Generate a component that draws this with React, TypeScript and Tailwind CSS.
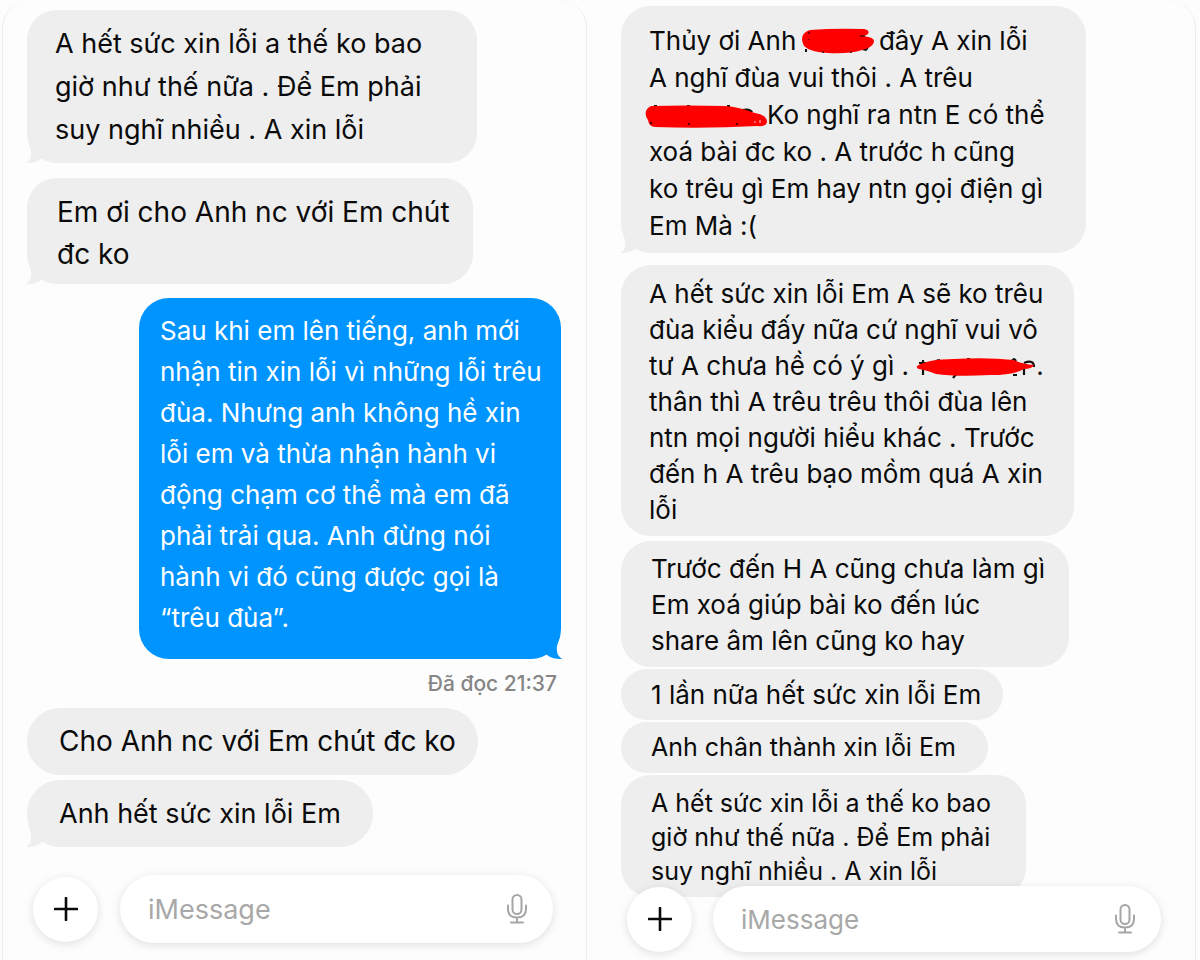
import type { ReactNode } from 'react'
import clsx from 'clsx'

type BubbleProps = {
  children: ReactNode
  className?: string
  tail?: boolean
  sent?: boolean
}

function Tail({ sent }: { sent?: boolean }) {
  return (
    <svg
      viewBox="0 0 24 24"
      aria-hidden="true"
      className={clsx(
        'absolute bottom-0 h-6 w-6',
        sent ? '-right-[3px] -scale-x-100 text-[#0094ff]' : '-left-[3px] text-[#eeeeee]',
      )}
    >
      <path d="M4 1C5 6 8 11 7 16C7 19 5 22 2 24C9 24 14 23 18 19L22 3Z" fill="currentColor" />
    </svg>
  )
}

function Bubble({ children, className, tail, sent }: BubbleProps) {
  return (
    <li
      className={clsx(
        'relative max-w-full whitespace-pre-line',
        sent ? 'self-end bg-[#0094ff] text-white' : 'self-start bg-[#eeeeee] text-[#0a0a0a]',
        className,
      )}
    >
      {tail && <Tail sent={sent} />}
      <p className="relative">{children}</p>
    </li>
  )
}

function Mic() {
  return (
    <svg viewBox="0 0 22 30" aria-hidden="true" className="h-[30px] w-[22px]" fill="none" stroke="#a6a6a6" strokeWidth="2" strokeLinecap="round">
      <rect x="6.5" y="1" width="9" height="19" rx="4.5" />
      <path d="M2 11.500V15C2 20.500 5.500 23.500 11 23.500S20 20.500 20 15V11.500M11 23.500V28.500M5 28.500H17" />
    </svg>
  )
}

function Composer({ id, className, fieldClassName }: { id: string; className: string; fieldClassName: string }) {
  return (
    <form className={clsx('relative flex items-center', className)} onSubmit={(e) => e.preventDefault()}>
      <button
        type="button"
        aria-label="Add attachment"
        className="flex h-[65px] w-[65px] shrink-0 items-center justify-center rounded-full bg-white shadow-[0_2px_10px_rgba(0,0,0,0.12)]"
      >
        <svg viewBox="0 0 24 24" className="h-6 w-6" fill="none" stroke="#0a0a0a" strokeWidth="2.6" strokeLinecap="round">
          <path d="M12 1V23M1 12H23" />
        </svg>
      </button>
      <div className={clsx('flex min-w-0 flex-1 items-center rounded-full bg-white shadow-[0_2px_10px_rgba(0,0,0,0.12)]', fieldClassName)}>
        <label htmlFor={id} className="sr-only">
          Message
        </label>
        <input
          id={id}
          type="text"
          placeholder="iMessage"
          className="h-full min-w-0 flex-1 bg-transparent outline-none placeholder:text-[#a8a8a8]"
        />
        <button type="button" aria-label="Dictate">
          <Mic />
        </button>
      </div>
    </form>
  )
}

// Marker strokes over names, with bits of the letters peeking out
function ScribbleShort() {
  return (
    <svg viewBox="0 0 76 26" aria-label="redacted" role="img" className="-mx-1 -mt-1 inline-block h-[26px] w-[76px] align-middle">
      <path d="M5 21H7V24H5ZM68 15C70 17 69 21 66 23L62 22Z" fill="#111" />
      <path d="M10 2Q35 0 64 1Q70 2 68 6Q66 8 62 8Q75 9 74 14Q72 20 62 22Q50 26 28 25Q10 24 4 18Q-2 6 10 2Z" fill="#ff0000" />
      <path d="M9 4V6M9 11V12M22 24H24M50 24H52M60 8H65" stroke="#5a0000" strokeWidth="1.500" />
    </svg>
  )
}

function ScribbleLong() {
  return (
    <svg viewBox="0 0 122 24" aria-label="redacted" role="img" className="-mt-0.5 -ml-1 inline-block h-6 w-[122px] align-middle">
      <path d="M9 1H12V3H9ZM42 1H45V3H42ZM82 1H85V3H82ZM97 5Q106 3 108 8L100 8Z" fill="#111" />
      <path d="M6 2Q40 1 80 2Q94 3 110 9Q122 11 122 18Q121 23 112 22Q60 25 10 23Q4 23 3 16Q-3 7 6 2Z" fill="#ff0000" />
      <path d="M5 18L7 20M43 20H45M91 20H93" stroke="#5a0000" strokeWidth="2" />
      <path d="M110 17V19M115 16V19" stroke="#ffb0b0" strokeWidth="1.200" />
    </svg>
  )
}

function ScribbleThin() {
  return (
    <svg viewBox="0 0 120 24" aria-label="redacted" role="img" className="inline-block h-6 w-[120px] align-middle">
      <path d="M7 4V19M3 7H10M19 6Q21 4 24 4M51 3H54M96 5Q98 1 100 5M108 8V19M108 7Q118 3 118 11M41 17L37 22M97 19H101" stroke="#111" strokeWidth="2.200" fill="none" />
      <path d="M1 10Q12 3 38 3Q70 1 98 4Q106 8 118 9Q116 13 108 13Q98 19 74 19Q40 21 20 18Q10 14 3 13Q0 12 1 10Z" fill="#ff0000" />
    </svg>
  )
}

export default function App() {
  return (
    <main className="grid min-h-screen grid-cols-2 overflow-hidden bg-[#fdfdfd] font-['Inter','Liberation_Sans',sans-serif]">
      <section className="mr-[13px] ml-0.5 flex flex-col rounded-t-[28px] border-x border-[#ececec] pt-2.5 pr-[25px] pl-6 text-[27px]">
        <ul className="flex flex-col">
          <Bubble tail className="w-[450px] rounded-[30px] py-3 pl-7 leading-[43px]">
            {'A hết sức xin lỗi a thế ko bao\ngiờ như thế nữa . Để Em phải\nsuy nghĩ nhiều . A xin lỗi'}
          </Bubble>
          <Bubble tail className="mt-[15px] w-[446px] rounded-[30px] pt-[13px] pb-[9px] pl-[30px] text-[28px] leading-[42px]">
            {'Em ơi cho Anh nc với Em chút\nđc ko'}
          </Bubble>
          <Bubble tail sent className="mt-3.5 w-[422px] rounded-[30px] pt-3 pb-[21px] pl-[21px] text-[26px] leading-[41px]">
            {'Sau khi em lên tiếng, anh mới\nnhận tin xin lỗi vì những lỗi trêu\nđùa. Nhưng anh không hề xin\nlỗi em và thừa nhận hành vi\nđộng chạm cơ thể mà em đã\nphải trải qua. Anh đừng nói\nhành vi đó cũng được gọi là\n“trêu đùa”.'}
          </Bubble>
          <li className="mt-2.5 mr-1 self-end text-[21px] leading-[30px] font-medium text-[#868686]">Đã đọc 21:37</li>
          <Bubble className="mt-[9px] w-[451px] rounded-[33px] py-3 pl-8 text-[28px] leading-[43px]">Cho Anh nc với Em chút đc ko</Bubble>
          <Bubble tail className="mt-[5px] w-[346px] rounded-[33px] py-3 pl-8 leading-[43px]">Anh hết sức xin lỗi Em</Bubble>
        </ul>
        <Composer id="message-left" className="mt-7 mr-2 ml-1.5 gap-[22px] pb-4" fieldClassName="h-[68px] pr-[25px] pl-7" />
      </section>

      <section className="mr-1 flex flex-col rounded-tr-[28px] border-r border-[#ececec] pt-1.5 pr-[34px] pl-[21px] text-[26px]">
        <ul className="flex flex-col">
          <Bubble tail className="w-[465px] rounded-[30px] pt-4 pb-[9px] pl-7 leading-[37px]">
            Thủy ơi Anh <ScribbleShort /> đây A xin lỗi{'\nA nghĩ đùa vui thôi . A trêu\n'}
            <ScribbleLong />
            {'Ko nghĩ ra ntn E có thể\nxoá bài đc ko . A trước h cũng\nko trêu gì Em hay ntn gọi điện gì\nEm Mà :('}
          </Bubble>
          <Bubble className="mt-3 w-[453px] rounded-[30px] pt-[11px] pb-2 pl-7 leading-[36px]">
            {'A hết sức xin lỗi Em A sẽ ko trêu\nđùa kiểu đấy nữa cứ nghĩ vui vô\ntư A chưa hề có ý gì . '}
            <ScribbleThin />
            {'.\nthân thì A trêu trêu thôi đùa lên\nntn mọi người hiểu khác . Trước\nđến h A trêu bạo mồm quá A xin\nlỗi'}
          </Bubble>
          <Bubble className="mt-[5px] w-[448px] rounded-[30px] pt-2.5 pb-2 pl-[30px] leading-[36px]">
            {'Trước đến H A cũng chưa làm gì\nEm xoá giúp bài ko đến lúc\nshare âm lên cũng ko hay'}
          </Bubble>
          <Bubble className="mt-0.5 w-[382px] rounded-[26px] py-2 pl-[30px] leading-[35px]">1 lần nữa hết sức xin lỗi Em</Bubble>
          <Bubble className="mt-0.5 w-[367px] rounded-[26px] py-2 pl-[30px] text-[25px] leading-[35px]">Anh chân thành xin lỗi Em</Bubble>
          <Bubble className="mt-0.5 w-[405px] rounded-[30px] pt-[11px] pb-[9px] pl-[30px] text-[25px] leading-[34px]">
            {'A hết sức xin lỗi a thế ko bao\ngiờ như thế nữa . Để Em phải\nsuy nghĩ nhiều . A xin lỗi'}
          </Bubble>
        </ul>
        <Composer id="message-right" className="-mt-[11px] ml-1.5 gap-[21px] pb-2" fieldClassName="h-[66px] pr-[25px] pl-7" />
      </section>
    </main>
  )
}
